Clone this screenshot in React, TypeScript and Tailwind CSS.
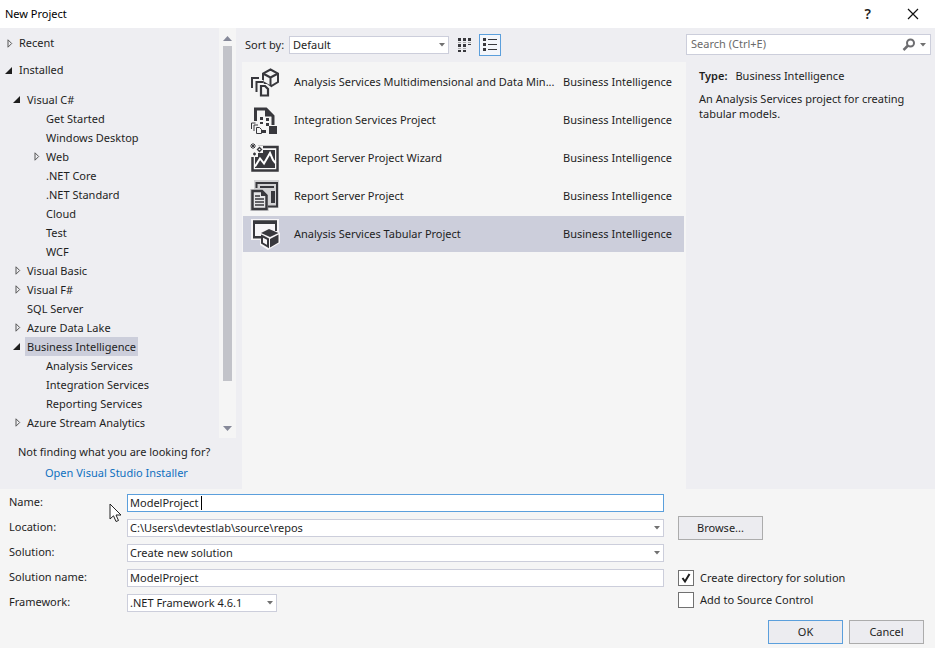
import type { ReactNode } from "react";

type Node = {
     label: string;
     level: 1 | 2;
     arrow?: "open" | "closed";
     selected?: boolean;
};

const nodes: Node[] = [
     { label: "Visual C#", level: 1, arrow: "open" },
     { label: "Get Started", level: 2 },
     { label: "Windows Desktop", level: 2 },
     { label: "Web", level: 2, arrow: "closed" },
     { label: ".NET Core", level: 2 },
     { label: ".NET Standard", level: 2 },
     { label: "Cloud", level: 2 },
     { label: "Test", level: 2 },
     { label: "WCF", level: 2 },
     { label: "Visual Basic", level: 1, arrow: "closed" },
     { label: "Visual F#", level: 1, arrow: "closed" },
     { label: "SQL Server", level: 1 },
     { label: "Azure Data Lake", level: 1, arrow: "closed" },
     { label: "Business Intelligence", level: 1, arrow: "open", selected: true },
     { label: "Analysis Services", level: 2 },
     { label: "Integration Services", level: 2 },
     { label: "Reporting Services", level: 2 },
     { label: "Azure Stream Analytics", level: 1, arrow: "closed" },
];

const Arrow = ({ state }: { state?: "open" | "closed" }) => (
     <svg viewBox="0 0 8 9" className="h-[9px] w-2 shrink-0" aria-hidden="true">
          {state === "open" && <path d="M7 1v7H0z" fill="#1e1e1e" />}
          {state === "closed" && (
               <path d="M3 .8v7.400L6.700 4.500z" fill="none" stroke="#555" />
          )}
     </svg>
);

const DropArrow = () => (
     <svg
          viewBox="0 0 6 4"
          className="pointer-events-none absolute top-1/2 right-1 h-1 w-1.5 -translate-y-1/2"
          aria-hidden="true"
     >
          <path d="M0 0h6L3 3.5z" fill="#717171" />
     </svg>
);

const Icon = ({ children }: { children: ReactNode }) => (
     <svg viewBox="0 0 32 32" className="size-8 shrink-0" fill="none" aria-hidden="true">
          {children}
     </svg>
);

const CubeIcon = () => (
     <Icon>
          <path
               d="M20.500 3.500 28 7.500v8.500l-7.500 4.500L13 16V7.500zM13 7.500l7.500 4 7.500-4M20.500 11.500v9"
               stroke="#38383d"
               strokeWidth="2"
          />
          <path d="M2 22V12h7M6.500 26V16h7" stroke="#f5f5f5" strokeWidth="4" />
          <path d="M2 22V12h7M6.500 26V16h7" stroke="#38383d" strokeWidth="2" />
          <path d="M9 18h8l4 3v10H9z" fill="#f5f5f5" />
          <path d="M11 20h4l3 3v6.500h-7z" fill="#f5f5f5" stroke="#38383d" strokeWidth="2.200" />
     </Icon>
);

const IntegrationIcon = () => (
     <Icon>
          <path d="M5.500 17V5H16l7 7v9" stroke="#38383d" strokeWidth="3" />
          <path d="M15 4v8.500h9L16.500 4z" fill="#38383d" />
          <path
               d="M10 13h3v3h-3zM16 14h3v3h-3zM16 19h3v3h-3zM10 18h3v2h-3zM12 26h4v3h-4zM19 22h8v8h-8z"
               fill="#38383d"
          />
          <path d="M1.500 25v-6h4M4 27v-6h4" stroke="#38383d" />
          <path d="M6.500 23.500h3l2 2v4h-5z" stroke="#38383d" fill="#f5f5f5" />
     </Icon>
);

const WizardIcon = () => (
     <Icon>
          <path d="M2.500 5h25v23.500h-25z" fill="#fafafa" stroke="#38383d" strokeWidth="2.500" />
          <path d="M5 8h20v18H5z" fill="#38383d" />
          <path
               d="m5 24.500 5-8 4 5 6-10.500 3 7 2.500 3"
               stroke="#fff"
               strokeWidth="2"
          />
          <path d="M0 0h8v4h5v7H8v4H0z" fill="#f5f5f5" />
          <path
               d="M3 1v6M0 4h6M1 2l4 4M5 2 1 6"
               stroke="#38383d"
          />
          <path
               d="m9.500 5.500 2 2-2 2-2-2zM4.500 10.500v3M3 12h3"
               stroke="#38383d"
               strokeWidth="1.300"
          />
     </Icon>
);

const ReportIcon = () => (
     <Icon>
          <path d="M4 0h25v28H19v3H0V9h4z" fill="#d2d2d4" />
          <path d="M6.500 8V3h20.500v23.500h-9" stroke="#38383d" strokeWidth="2" />
          <path d="M10 6h14v2H10zM21 11h4v12h-4z" fill="#38383d" />
          <path
               d="M2.500 11h9.500l4.500 4.500V29h-14z"
               fill="#e6e6e8"
               stroke="#38383d"
               strokeWidth="2.500"
          />
          <path d="M11 11v5h5" fill="#38383d" />
          <path d="M5 16h5M5 19h9M5 22h9M5 25h9" stroke="#38383d" strokeWidth="1.500" />
     </Icon>
);

const TabularIcon = () => (
     <Icon>
          <path d="M1 1h28v13l1 1v10l-12 7-8-5v-5H1z" fill="#f7f5f7" />
          <path d="M4 19.500V3.500h22V13" stroke="#38383d" strokeWidth="2" />
          <path d="M3 2.500h24v3.500H3zM3 18h8v2.500H3z" fill="#38383d" />
          <path d="m11 15 8-4 9.500 4-8.500 4z" fill="#38383d" />
          <path d="m12 18 6 3v7.500L12 25z" fill="#f7f5f7" stroke="#38383d" strokeWidth="2" />
          <path d="m20 21 8.500-4.500v8L20 29.500z" fill="#38383d" />
     </Icon>
);

const templates = [
     {
          name: "Analysis Services Multidimensional and Data Min...",
          icon: <CubeIcon />,
     },
     { name: "Integration Services Project", icon: <IntegrationIcon /> },
     { name: "Report Server Project Wizard", icon: <WizardIcon /> },
     { name: "Report Server Project", icon: <ReportIcon /> },
     { name: "Analysis Services Tabular Project", icon: <TabularIcon />, selected: true },
];

const Sidebar = () => (
     <nav className="flex w-[242px] shrink-0 flex-col pb-[5px]">
          <div className="flex justify-between pr-1.5">
               <div className="flex-1 pt-1.5">
                    <button className="flex h-[19px] items-center gap-1.5 pl-[5px]">
                         <Arrow state="closed" />
                         Recent
                    </button>
                    <button className="mt-2 flex h-[19px] items-center gap-1.5 pl-[5px]">
                         <Arrow state="open" />
                         Installed
                    </button>
                    <ul className="mt-2.5">
                         {nodes.map((node) => (
                              <li
                                   key={node.label}
                                   className={node.level === 1 ? "pl-[13px]" : "pl-8"}
                              >
                                   <button className="flex h-[19px] items-center gap-1">
                                        <Arrow state={node.arrow} />
                                        <span
                                             className={
                                                  node.selected
                                                       ? "bg-[#cccedb] px-0.5 leading-[19px]"
                                                       : "px-0.5 leading-[19px]"
                                             }
                                        >
                                             {node.label}
                                        </span>
                                   </button>
                              </li>
                         ))}
                    </ul>
               </div>
               <div className="flex h-[410px] w-[17px] flex-col items-center bg-[#f5f5f5] py-1.5">
                    <svg viewBox="0 0 9 6" className="my-px h-1.5 w-[9px]" aria-hidden="true">
                         <path d="M0 6h9L4.500 1z" fill="#868999" />
                    </svg>
                    <div className="mt-1 h-[335px] w-[9px] bg-[#c2c3c9]" />
                    <svg viewBox="0 0 9 6" className="mt-auto h-1.5 w-[9px]" aria-hidden="true">
                         <path d="M0 0h9L4.500 5z" fill="#868999" />
                    </svg>
               </div>
          </div>
          <p className="mt-1 pl-[18px] leading-5">Not finding what you are looking for?</p>
          <a href="#" className="ml-[45px] w-fit leading-[22px] text-[#0e70c0]">
               Open Visual Studio Installer
          </a>
     </nav>
);

const TemplateList = () => (
     <main className="flex min-w-0 flex-1 flex-col">
          <div className="flex h-[34px] items-center pl-[3px]">
               <label htmlFor="sort" className="w-11 whitespace-nowrap">
                    Sort by:
               </label>
               <div className="relative w-40">
                    <select
                         id="sort"
                         className="block h-[18px] w-full appearance-none border border-[#cccedb] bg-white pl-[3px] leading-4"
                    >
                         <option>Default</option>
                    </select>
                    <DropArrow />
               </div>
               <button aria-label="Small icons" className="ml-[5px] grid size-[22px] place-items-center">
                    <svg viewBox="0 0 14 14" className="size-3.5" fill="#38383d">
                         <path d="M0 0h3v3H0zM5 0h3v3H5zM10 0h3v3h-3zM0 6h3v3H0zM5 6h3v3H5zM0 12h3v2H0zM5 12h3v2H5z" />
                         <path d="M10 6h3v1h-3z" />
                         <path d="M0 4.500h3M5 4.500h3M10 4.500h3M0 10.500h3M5 10.500h3" stroke="#aaa" />
                    </svg>
               </button>
               <button
                    aria-label="Medium icons"
                    className="ml-[3px] grid size-[22px] place-items-center border border-[#5b9fdc] bg-[#f3f6fb]"
               >
                    <svg viewBox="0 0 14 14" className="size-3.5" fill="#38383d">
                         <path d="M0 0h3v3H0zM0 5h3v3H0zM0 10h3v3H0z" />
                         <path d="M5 1h9v1H5zM5 6h9v1H5zM5 11h9v1H5z" />
                    </svg>
               </button>
          </div>
          <ul className="flex flex-1 flex-col gap-0.5 bg-[#f5f5f5] pt-0.5 pr-0.5 pl-px">
               {templates.map((template) => (
                    <li key={template.name}>
                         <button
                              className={
                                   template.selected
                                        ? "flex h-9 w-full items-center bg-[#cccedb] pl-[7px] text-left"
                                        : "flex h-9 w-full items-center pl-[7px] text-left"
                              }
                         >
                              {template.icon}
                              <span className="ml-3 flex-1 whitespace-nowrap">{template.name}</span>
                              <span className="w-[121px] shrink-0">Business Intelligence</span>
                         </button>
                    </li>
               ))}
          </ul>
     </main>
);

const Details = () => (
     <aside className="w-[249px] shrink-0 pt-1.5 pr-1">
          <div className="flex h-[21px] items-center border border-[#cccedb] bg-white pr-1">
               <input
                    type="search"
                    aria-label="Search"
                    placeholder="Search (Ctrl+E)"
                    className="min-w-0 flex-1 bg-transparent pl-1 outline-none placeholder:text-[#6a6a6a]"
               />
               <button aria-label="Search" className="flex items-center gap-1">
                    <svg viewBox="0 0 14 14" className="size-3.5" fill="none" stroke="#6d6d70">
                         <circle cx="8.500" cy="5" r="3.500" strokeWidth="2" />
                         <path d="M6 7.500 1.500 12" strokeWidth="2.500" />
                    </svg>
                    <svg viewBox="0 0 6 4" className="h-1 w-1.5">
                         <path d="M0 0h6L3 3.500z" fill="#717171" stroke="none" />
                    </svg>
               </button>
          </div>
          <div className="px-[13px] pt-[13px] leading-[15px]">
               <p>
                    <b className="mr-2 font-semibold">Type:</b>Business Intelligence
               </p>
               <p className="mt-2">An Analysis Services project for creating tabular models.</p>
          </div>
     </aside>
);

const fieldClass =
     "block h-[18px] w-full appearance-none border border-[#cccedb] bg-white pl-0.5 leading-4 outline-none";
const rowClass = "flex h-[25px] items-center";
const labelClass = "w-[118px] shrink-0";
const buttonClass = "h-6 border bg-[#ececf0]";

const CheckBox = ({ id, label, checked }: { id: string; label: string; checked?: boolean }) => (
     <div className="relative flex h-[22px] items-center gap-1.5">
          <input
               id={id}
               type="checkbox"
               defaultChecked={checked}
               className="peer size-4 appearance-none border border-[#717171] bg-white"
          />
          <svg
               viewBox="0 0 16 16"
               className="pointer-events-none absolute left-0 hidden size-4 peer-checked:block"
               aria-hidden="true"
          >
               <path d="m4.500 8 2.500 3.500L11.500 4" fill="none" stroke="#1e1e1e" strokeWidth="2" />
          </svg>
          <label htmlFor={id}>{label}</label>
     </div>
);

const ProjectForm = () => (
     <form className="relative pt-px" onSubmit={(e) => e.preventDefault()}>
          <div className="flex">
               <div className="min-w-0 flex-1 pl-[9px]">
                    <div className={rowClass}>
                         <label htmlFor="name" className={labelClass}>
                              Name:
                         </label>
                         <div className="relative flex-1">
                              <input
                                   id="name"
                                   defaultValue="ModelProject"
                                   className="block h-[18px] w-full border border-[#5b9fdc] bg-white pl-0.5 leading-4 outline-none"
                              />
                              <span className="absolute top-0.5 left-[74px] h-3.5 w-px bg-black" />
                         </div>
                    </div>
                    <div className={rowClass}>
                         <label htmlFor="location" className={labelClass}>
                              Location:
                         </label>
                         <div className="relative flex-1">
                              <select id="location" className={fieldClass}>
                                   <option>C:\Users\devtestlab\source\repos</option>
                              </select>
                              <DropArrow />
                         </div>
                    </div>
                    <div className={rowClass}>
                         <label htmlFor="solution" className={labelClass}>
                              Solution:
                         </label>
                         <div className="relative flex-1">
                              <select id="solution" className={fieldClass}>
                                   <option>Create new solution</option>
                              </select>
                              <DropArrow />
                         </div>
                    </div>
                    <div className={rowClass}>
                         <label htmlFor="solution-name" className={labelClass}>
                              Solution name:
                         </label>
                         <input
                              id="solution-name"
                              defaultValue="ModelProject"
                              className={fieldClass}
                         />
                    </div>
                    <div className={rowClass}>
                         <label htmlFor="framework" className={labelClass}>
                              Framework:
                         </label>
                         <div className="relative w-[150px]">
                              <select id="framework" className={fieldClass}>
                                   <option>.NET Framework 4.6.1</option>
                              </select>
                              <DropArrow />
                         </div>
                    </div>
               </div>
               <div className="w-[271px] shrink-0 pt-[26px] pl-3.5">
                    <button type="button" className={`${buttonClass} mb-[27px] block w-[85px] border-[#acacac]`}>
                         Browse...
                    </button>
                    <CheckBox id="directory" label="Create directory for solution" checked />
                    <CheckBox id="source-control" label="Add to Source Control" />
               </div>
          </div>
          <div className="flex justify-end gap-1.5 pt-[5px] pr-[11px] pb-1">
               <button type="submit" className={`${buttonClass} w-[75px] border-[#5b9fdc]`}>
                    OK
               </button>
               <button type="button" className={`${buttonClass} w-[75px] border-[#acacac]`}>
                    Cancel
               </button>
          </div>
          {/* mouse pointer */}
          <svg
               viewBox="0 0 14 21"
               className="pointer-events-none absolute top-3.5 left-[109px] h-[21px] w-3.5"
               aria-hidden="true"
          >
               <path
                    d="M1 1v15l3.500-3.200L7 18.500l2.500-1-2.500-5.500h5z"
                    fill="#fff"
                    stroke="#222"
               />
          </svg>
     </form>
);

const App = () => (
     <div className="min-h-screen bg-[#f5f5f5] font-['Noto_Sans','Open_Sans',sans-serif] text-[11px] text-[#1e1e1e]">
          <header className="flex h-7 items-center justify-between bg-white pr-4 pl-[5px]">
               <h1 className="text-black">New Project</h1>
               <div className="flex items-center gap-9">
                    <button aria-label="Help" className="text-sm font-semibold">
                         ?
                    </button>
                    <button aria-label="Close">
                         <svg viewBox="0 0 12 12" className="size-3" stroke="#111" strokeWidth="1.200">
                              <path d="m1 1 10 10M11 1 1 11" />
                         </svg>
                    </button>
               </div>
          </header>
          <div className="flex bg-[#eeeef2]">
               <Sidebar />
               <TemplateList />
               <Details />
          </div>
          <ProjectForm />
     </div>
);

export default App;
